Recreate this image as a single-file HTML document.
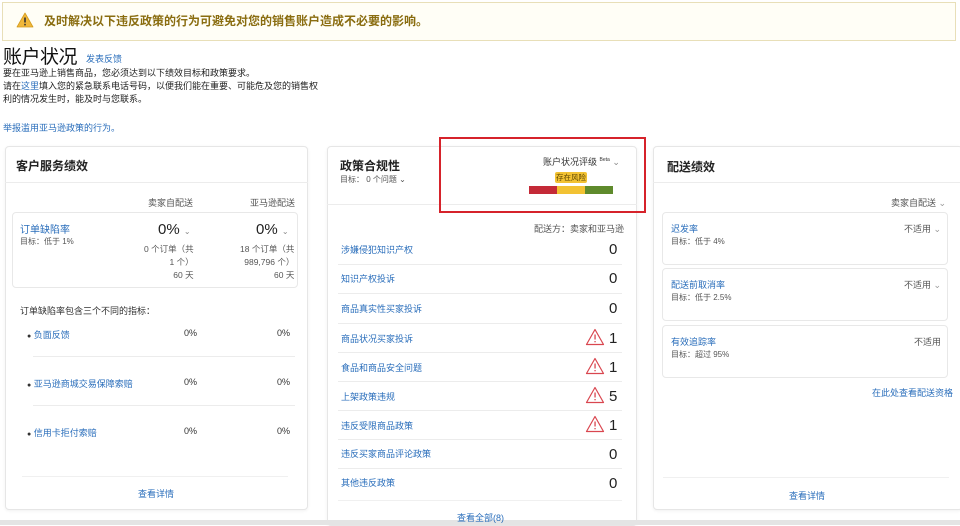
<!DOCTYPE html>
<html><head><meta charset="utf-8"><style>
*{margin:0;padding:0;box-sizing:border-box}
body{width:960px;height:525px;background:#fff;position:relative;overflow:hidden;font-family:"Liberation Sans","Noto Sans CJK SC",sans-serif;color:#333;font-size:9px}
.a{position:absolute;white-space:nowrap}
.l{color:#2a6ebb}
.card{position:absolute;border:1px solid #e6e6e6;border-radius:4px;background:#fff;box-shadow:0 1px 3px rgba(0,0,0,.06)}
.box{position:absolute;border:1px solid #e8e8e8;border-radius:4px}
.hr{position:absolute;height:1px;background:#ececec}
.h{font-size:12px;font-weight:bold;color:#222}
.n{font-size:15px;color:#222}
.g{color:#555}
</style></head><body>
<div class="a" style="left:2px;top:2px;width:954px;height:39px;background:#fffef6;border:1px solid #e8dfb8;"></div>
<svg class="a" style="left:16px;top:12px" width="18" height="16" viewBox="0 0 18 16"><path d="M9 1 L17 15 L1 15 Z" fill="#f0b73a" stroke="#d49c1e" stroke-width=".8" stroke-linejoin="round"/><rect x="8.2" y="5.5" width="1.6" height="5" fill="#333"/><rect x="8.2" y="11.8" width="1.6" height="1.6" fill="#333"/></svg>
<div class="a" style="left:44px;top:12px;font-size:12px;font-weight:bold;color:#8a6d10">及时解决以下违反政策的行为可避免对您的销售账户造成不必要的影响。</div>
<div class="a" style="left:3px;top:42px;font-size:19px;color:#111;letter-spacing:-0.5px">账户状况</div>
<div class="a l" style="left:86px;top:52px;font-size:9px">发表反馈</div>
<div class="a" style="left:3px;top:67px;line-height:13px;color:#222">要在亚马逊上销售商品，您必须达到以下绩效目标和政策要求。<br>请在<span class="l">这里</span>填入您的紧急联系电话号码，以便我们能在重要、可能危及您的销售权<br>利的情况发生时，能及时与您联系。</div>
<div class="a l" style="left:3px;top:121px">举报滥用亚马逊政策的行为。</div>

<!-- left card -->
<div class="card" style="left:5px;top:146px;width:303px;height:364px"></div>
<div class="a h" style="left:16px;top:157px">客户服务绩效</div>
<div class="hr" style="left:5px;top:182px;width:303px"></div>
<div class="a g" style="left:148px;top:196px">卖家自配送</div>
<div class="a g" style="left:250px;top:196px">亚马逊配送</div>
<div class="box" style="left:12px;top:212px;width:286px;height:76px"></div>
<div class="a l" style="left:20px;top:221px;font-size:10px">订单缺陷率</div>
<div class="a g" style="left:20px;top:236px;font-size:8px">目标：低于 1%</div>
<div class="a n" style="left:158px;top:221px">0% <span style="font-size:8px;color:#888">⌄</span></div>
<div class="a g" style="left:144px;top:243px;line-height:13px;text-align:right;font-size:8.5px">0 个订单（共<br>1 个）<br>60 天</div>
<div class="a n" style="left:256px;top:221px">0% <span style="font-size:8px;color:#888">⌄</span></div>
<div class="a g" style="left:240px;top:243px;line-height:13px;text-align:right;font-size:8.5px">18 个订单（共<br>989,796 个）<br>60 天</div>
<div class="a" style="left:20px;top:304px">订单缺陷率包含三个不同的指标：</div>
<div class="a" style="left:27px;top:328px"><span style="font-size:7px">●</span> <span class="l">负面反馈</span></div>
<div class="a" style="left:27px;top:377px"><span style="font-size:7px">●</span> <span class="l">亚马逊商城交易保障索赔</span></div>
<div class="a" style="left:27px;top:426px"><span style="font-size:7px">●</span> <span class="l">信用卡拒付索赔</span></div>
<div class="a" style="left:184px;top:328px">0%</div><div class="a" style="left:277px;top:328px">0%</div>
<div class="a" style="left:184px;top:377px">0%</div><div class="a" style="left:277px;top:377px">0%</div>
<div class="a" style="left:184px;top:426px">0%</div><div class="a" style="left:277px;top:426px">0%</div>
<div class="hr" style="left:33px;top:356px;width:262px"></div>
<div class="hr" style="left:33px;top:405px;width:262px"></div>
<div class="hr" style="left:22px;top:476px;width:266px;background:#f0f0f0"></div>
<div class="a l" style="left:138px;top:487px">查看详情</div>

<!-- middle card -->
<div class="card" style="left:327px;top:146px;width:310px;height:380px"></div>
<div class="a h" style="left:340px;top:157px">政策合规性</div>
<div class="a g" style="left:340px;top:174px;font-size:8px">目标：&nbsp;0 个问题 ⌄</div>
<div class="hr" style="left:327px;top:204px;width:310px"></div>
<div class="a" style="left:543px;top:155px;font-size:9px;color:#333">账户状况评级 <sup style="font-size:5px">Beta</sup> <span style="color:#888">⌄</span></div>
<div class="a" style="left:555px;top:172px;width:32px;height:11px;background:#f2c233;border-radius:2px;font-size:7.5px;color:#5a4300;text-align:center;line-height:11px">存在风险</div>
<div class="a" style="left:529px;top:186px;width:28px;height:8px;background:#c42a37"></div>
<div class="a" style="left:557px;top:186px;width:28px;height:8px;background:#f2c233"></div>
<div class="a" style="left:585px;top:186px;width:28px;height:8px;background:#5f8a2c"></div>
<div class="a" style="left:439px;top:137px;width:207px;height:76px;border:2px solid #d6232b"></div>
<div class="a g" style="left:534px;top:222px">配送方：卖家和亚马逊</div>
<div class="a l" style="left:341px;top:243px">涉嫌侵犯知识产权</div><div class="a n" style="left:609px;top:241px">0</div>
<div class="a l" style="left:341px;top:272px">知识产权投诉</div><div class="a n" style="left:609px;top:270px">0</div>
<div class="a l" style="left:341px;top:302px">商品真实性买家投诉</div><div class="a n" style="left:609px;top:300px">0</div>
<div class="a l" style="left:341px;top:332px">商品状况买家投诉</div><div class="a n" style="left:609px;top:330px">1</div>
<div class="a l" style="left:341px;top:361px">食品和商品安全问题</div><div class="a n" style="left:609px;top:359px">1</div>
<div class="a l" style="left:341px;top:390px">上架政策违规</div><div class="a n" style="left:609px;top:388px">5</div>
<div class="a l" style="left:341px;top:419px">违反受限商品政策</div><div class="a n" style="left:609px;top:417px">1</div>
<div class="a l" style="left:341px;top:447px">违反买家商品评论政策</div><div class="a n" style="left:609px;top:446px">0</div>
<div class="a l" style="left:341px;top:476px">其他违反政策</div><div class="a n" style="left:609px;top:475px">0</div>
<div class="hr" style="left:338px;top:264px;width:284px"></div>
<div class="hr" style="left:338px;top:293px;width:284px"></div>
<div class="hr" style="left:338px;top:323px;width:284px"></div>
<div class="hr" style="left:338px;top:352px;width:284px"></div>
<div class="hr" style="left:338px;top:381px;width:284px"></div>
<div class="hr" style="left:338px;top:410px;width:284px"></div>
<div class="hr" style="left:338px;top:439px;width:284px"></div>
<div class="hr" style="left:338px;top:468px;width:284px"></div>
<svg class="a" style="left:585px;top:328px" width="20" height="18" viewBox="0 0 20 18"><path d="M10 1.5 L18.5 16.5 L1.5 16.5 Z" fill="none" stroke="#d9464f" stroke-width="1.2" stroke-linejoin="round"/><rect x="9.4" y="6.5" width="1.3" height="5" fill="#d9464f"/><rect x="9.4" y="13" width="1.3" height="1.3" fill="#d9464f"/></svg>
<svg class="a" style="left:585px;top:357px" width="20" height="18" viewBox="0 0 20 18"><path d="M10 1.5 L18.5 16.5 L1.5 16.5 Z" fill="none" stroke="#d9464f" stroke-width="1.2" stroke-linejoin="round"/><rect x="9.4" y="6.5" width="1.3" height="5" fill="#d9464f"/><rect x="9.4" y="13" width="1.3" height="1.3" fill="#d9464f"/></svg>
<svg class="a" style="left:585px;top:386px" width="20" height="18" viewBox="0 0 20 18"><path d="M10 1.5 L18.5 16.5 L1.5 16.5 Z" fill="none" stroke="#d9464f" stroke-width="1.2" stroke-linejoin="round"/><rect x="9.4" y="6.5" width="1.3" height="5" fill="#d9464f"/><rect x="9.4" y="13" width="1.3" height="1.3" fill="#d9464f"/></svg>
<svg class="a" style="left:585px;top:415px" width="20" height="18" viewBox="0 0 20 18"><path d="M10 1.5 L18.5 16.5 L1.5 16.5 Z" fill="none" stroke="#d9464f" stroke-width="1.2" stroke-linejoin="round"/><rect x="9.4" y="6.5" width="1.3" height="5" fill="#d9464f"/><rect x="9.4" y="13" width="1.3" height="1.3" fill="#d9464f"/></svg>
<div class="hr" style="left:338px;top:500px;width:284px;background:#f0f0f0"></div>
<div class="a" style="left:0;top:520px;width:960px;height:5px;background:#e4e4e4"></div>
<div class="a l" style="left:457px;top:511px">查看全部(8)</div>

<!-- right card -->
<div class="card" style="left:653px;top:146px;width:310px;height:364px"></div>
<div class="a h" style="left:667px;top:158px">配送绩效</div>
<div class="hr" style="left:653px;top:182px;width:310px"></div>
<div class="a g" style="left:891px;top:196px">卖家自配送 <span style="color:#999">⌄</span></div>
<div class="box" style="left:662px;top:212px;width:286px;height:53px"></div>
<div class="box" style="left:662px;top:268px;width:286px;height:53px"></div>
<div class="box" style="left:662px;top:325px;width:286px;height:53px"></div>
<div class="a l" style="left:671px;top:222px">迟发率</div><div class="a g" style="left:671px;top:236px;font-size:8px">目标：低于 4%</div>
<div class="a l" style="left:671px;top:278px">配送前取消率</div><div class="a g" style="left:671px;top:292px;font-size:8px">目标：低于 2.5%</div>
<div class="a l" style="left:671px;top:335px">有效追踪率</div><div class="a g" style="left:671px;top:349px;font-size:8px">目标：超过 95%</div>
<div class="a g" style="left:904px;top:222px">不适用 <span style="color:#999">⌄</span></div>
<div class="a g" style="left:904px;top:278px">不适用 <span style="color:#999">⌄</span></div>
<div class="a g" style="left:914px;top:335px">不适用</div>
<div class="a l" style="left:872px;top:386px">在此处查看配送资格</div>
<div class="hr" style="left:663px;top:477px;width:286px;background:#f0f0f0"></div>
<div class="a l" style="left:789px;top:489px">查看详情</div>
</body></html>
